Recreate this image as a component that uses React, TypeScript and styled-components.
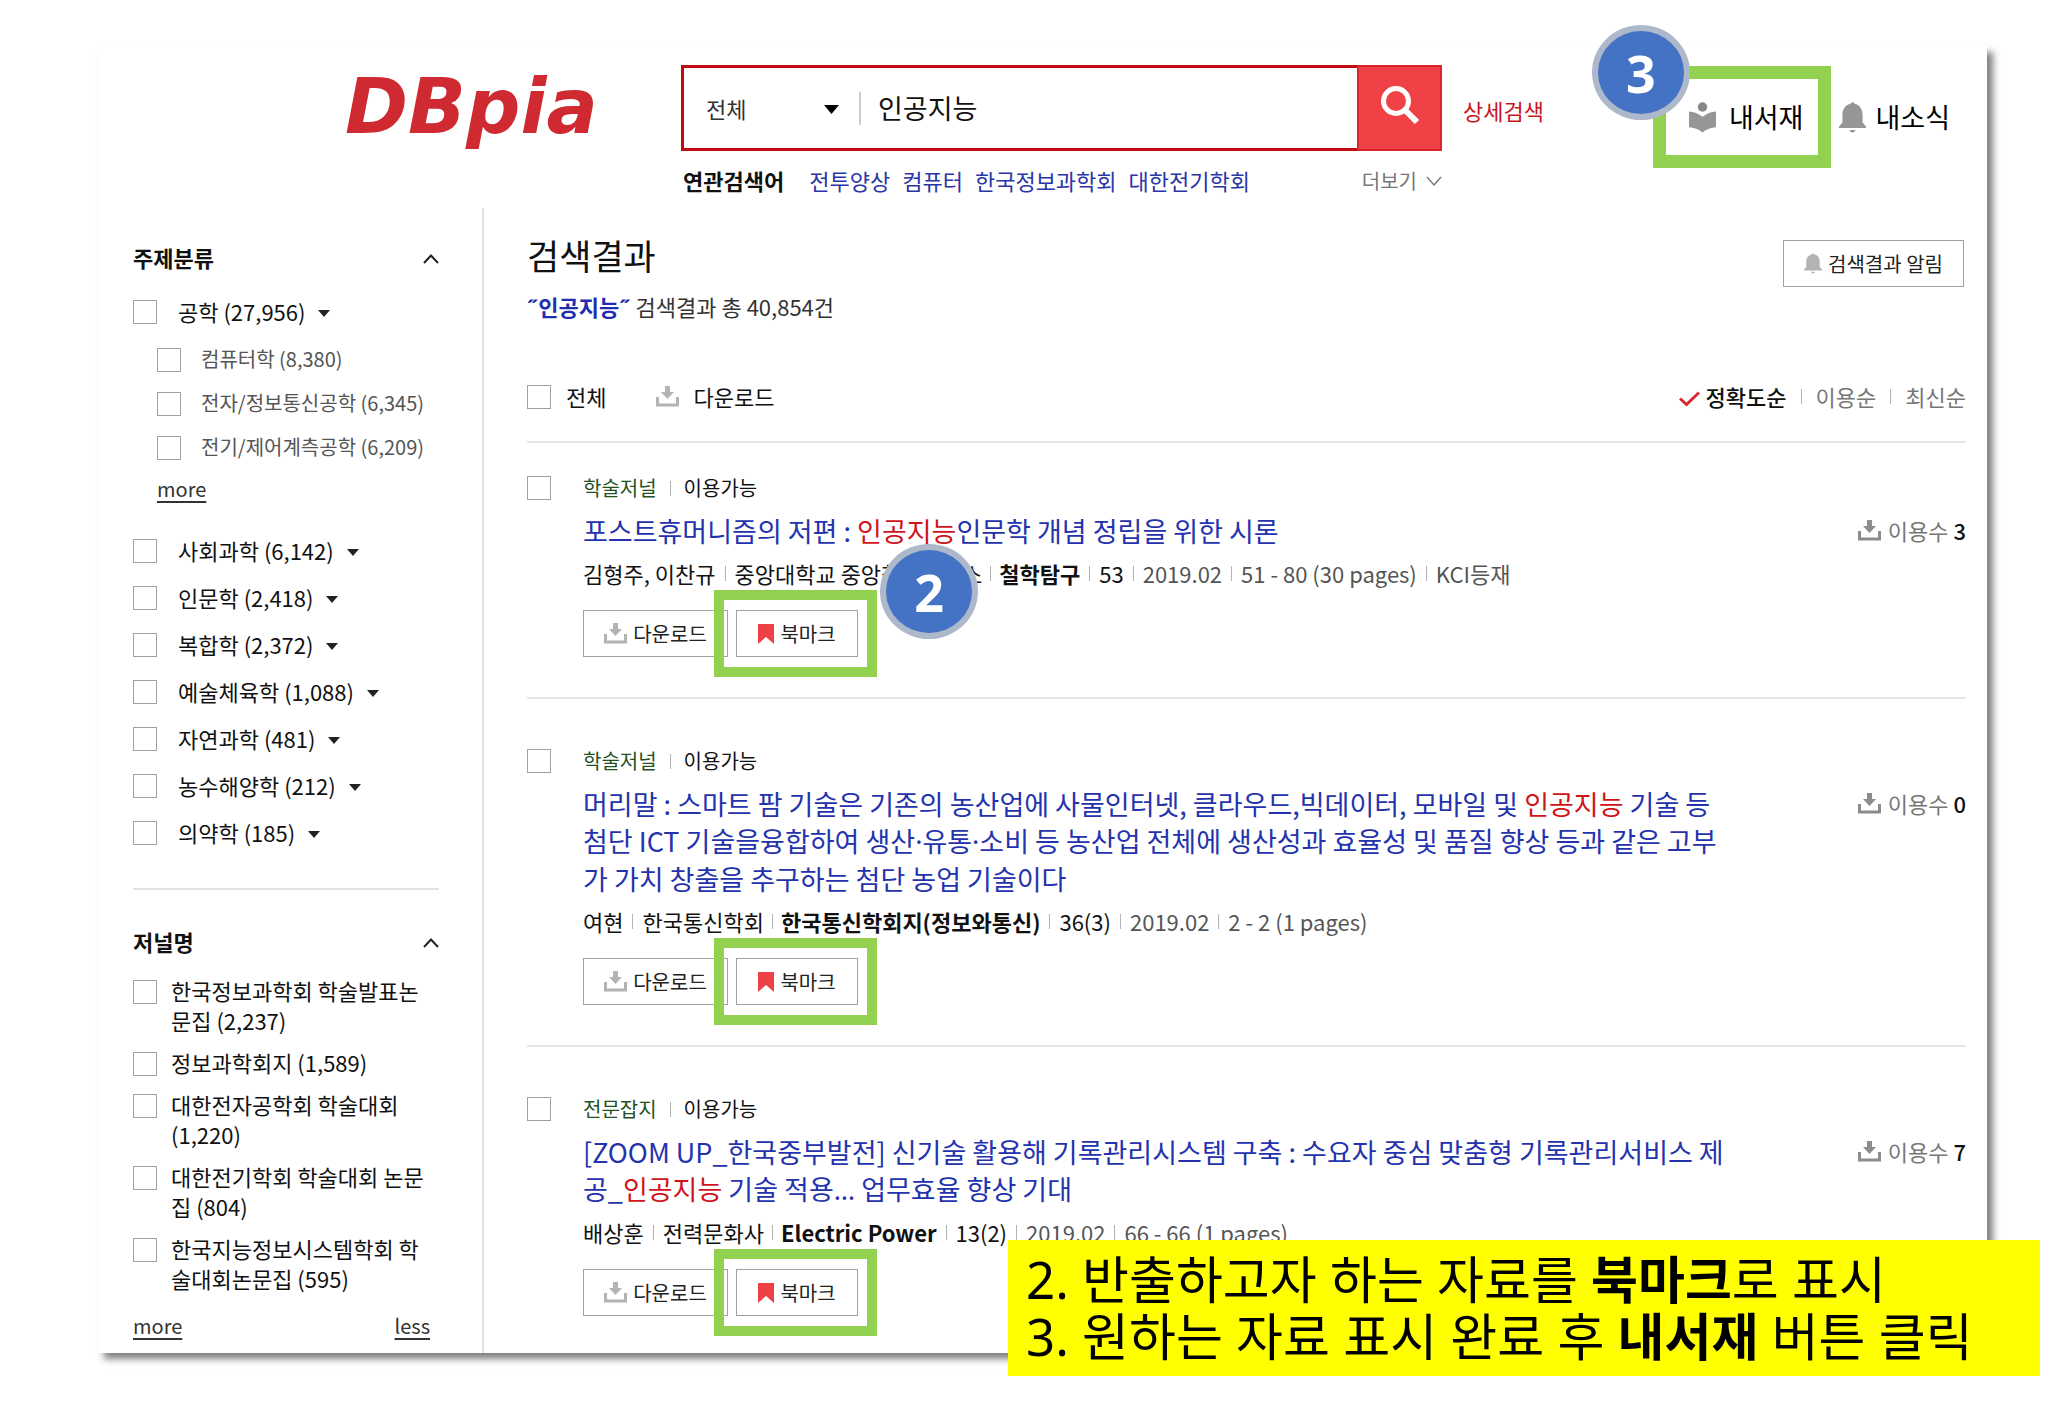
import React from "react";
import styled, { createGlobalStyle, css } from "styled-components";

const sans = `"Noto Sans CJK KR", "Noto Sans", sans-serif`;

const GlobalStyle = createGlobalStyle`
  *, *::before, *::after { box-sizing: border-box; }
  body { margin: 0; background: #fff; color: #111; font-family: ${sans}; font-size: 22px; line-height: 30px; }
  button, input, select { font: inherit; color: inherit; }
  h1, h2, h3, p, ul { margin: 0; padding: 0; font-weight: 400; }
  ul { list-style: none; }
  a { color: inherit; text-decoration: none; }
`;

/* ---------- frame ---------- */

const Slide = styled.div`
  position: relative;
  min-height: 100vh;
  padding: 46px 68px 50px 98px;
`;

const Panel = styled.div`
  background: #fff;
  box-shadow: 6px 6px 7px rgba(0, 0, 0, 0.5);
`;

const Columns = styled.div`
  display: flex;
`;

/* ---------- header ---------- */

const Header = styled.header`
  display: flex;
  align-items: flex-start;
  padding: 19px 37px 0 247px;
  height: 162px;
`;

const Logo = styled.a`
  flex: 0 0 336px;
  margin-top: 9px;
  font-family: "DejaVu Sans", sans-serif;
  font-size: 76px;
  line-height: 66px;
  font-weight: 700;
  font-style: italic;
  color: #cf2a31;
`;

const SearchArea = styled.div`
  flex: 0 1 761px;
  min-width: 0;
`;

const SearchForm = styled.form`
  display: flex;
  align-items: center;
  height: 86px;
  border: 3px solid #c00d14;
`;

const ScopeBox = styled.label`
  position: relative;
  flex: 0 0 177px;
  height: 33px;
  padding-left: 22px;
  border-right: 2px solid #ccc;

  svg {
    position: absolute;
    right: 20px;
    top: 13px;
    pointer-events: none;
  }
`;

const ScopeSelect = styled.select`
  width: 100%;
  height: 33px;
  padding: 0;
  border: 0;
  appearance: none;
  background: transparent;
  color: #333;
`;

const QueryInput = styled.input`
  flex: 1;
  min-width: 0;
  padding: 0 17px 2px;
  border: 0;
  outline: 0;
  font-size: 27px;
  line-height: 40px;
  height: 42px;
`;

const SearchButton = styled.button`
  flex: 0 0 85px;
  height: 86px;
  margin-right: -3px;
  display: grid;
  place-items: center;
  padding: 0 0 6px;
  border: 2px solid #d9262d;
  background: #f04246;
  color: #fff;
`;

const RelatedRow = styled.div`
  display: flex;
  align-items: center;
  margin-top: 13px;
  padding-left: 2px;
`;

const RelatedLabel = styled.strong`
  margin-right: 25px;
`;

const RelatedLink = styled.a`
  margin-right: 12px;
  color: #2a36a8;
`;

const MoreButton = styled.button`
  display: flex;
  align-items: center;
  gap: 9px;
  margin-left: auto;
  padding: 2px 0 0;
  border: 0;
  background: none;
  color: #777;
  font-size: 20px;
`;

const DetailLink = styled.a`
  margin: 30px 0 0 21px;
  color: #c8161d;
`;

const UserNav = styled.nav`
  display: flex;
  gap: 36px;
  margin: 34px 0 0 auto;
`;

const UserLink = styled.a<{ $gap: number }>`
  position: relative;
  display: flex;
  align-items: center;
  gap: ${(p) => p.$gap}px;
  height: 36px;
  font-size: 27px;
  color: #000;
`;

/* ---------- annotations laid over the page ---------- */

const Highlight = styled.span<{ $large?: boolean }>`
  position: absolute;
  z-index: 1;
  pointer-events: none;
  ${(p) =>
    p.$large
      ? css`inset: -33px -28px -33px -36px; border: 13px solid #92d050;`
      : css`inset: -21px -20px -21px -23px; border: 10px solid #92d050;`}
`;

const StepBadge = styled.span<{ $x: number; $y: number }>`
  position: absolute;
  z-index: 2;
  left: ${(p) => p.$x}px;
  top: ${(p) => p.$y}px;
  display: grid;
  place-items: center;
  width: 98px;
  height: 95px;
  border: 6px solid #adb9ca;
  border-radius: 50%;
  background: #4472c4;
  color: #fff;
  font-family: "Noto Sans", sans-serif;
  font-size: 52px;
  line-height: 60px;
  font-weight: 700;
`;

const Note = styled.div`
  position: absolute;
  z-index: 3;
  right: 15px;
  bottom: 30px;
  width: 1032px;
  height: 136px;
  padding: 11px 18px;
  background: #ff0;
  color: #000;
  font-family: "Noto Sans", "Noto Sans CJK KR", sans-serif;
  font-size: 51px;
  line-height: 57px;
  white-space: nowrap;
`;

/* ---------- form parts ---------- */

const Check = styled.input.attrs({ type: "checkbox" })`
  flex: 0 0 24px;
  width: 24px;
  height: 24px;
  margin: 0;
  appearance: none;
  border: 1px solid #a0a0a0;
  background: #fff;
`;

/* ---------- sidebar ---------- */

const Sidebar = styled.aside`
  flex: 0 0 386px;
  padding: 34px 43px 12px 35px;
  border-right: 2px solid #e0e0e0;
`;

const FacetHead = styled.div`
  display: flex;
  align-items: center;
  justify-content: space-between;
  height: 30px;
`;

const FacetTitle = styled.h2`
  font-size: 22px;
  font-weight: 700;
`;

const IconButton = styled.button`
  display: flex;
  padding: 3px 0 0;
  border: 0;
  background: none;
  color: #222;
`;

const SubjectList = styled.ul<{ $top?: number }>`
  padding-top: ${(p) => p.$top ?? 0}px;
`;

const FacetRow = styled.li`
  display: flex;
  align-items: center;
  height: 47px;

  label { margin: 0 13px 0 21px; padding-bottom: 2px; }
`;

const SubList = styled.ul`
  padding: 3px 0 0 24px;
`;

const SubRow = styled.li`
  display: flex;
  align-items: center;
  gap: 20px;
  height: 44px;
  font-size: 20px;
  color: #555;
  white-space: nowrap;

  label { padding-bottom: 2px; }
`;

const TextLink = styled.a`
  font-size: 20px;
  color: #333;
  text-decoration: underline;
  text-underline-offset: 4px;
`;

const SubMore = styled.div`
  height: 57px;
  padding: 2px 0 0 24px;
`;

const Divider = styled.hr`
  height: 2px;
  margin: 32px 0 36px;
  border: 0;
  background: #e2e2e2;
`;

const JournalList = styled.ul`
  display: grid;
  gap: 12px;
  padding-top: 19px;
`;

const JournalRow = styled.li`
  display: flex;
  align-items: flex-start;
  gap: 14px;

  input { margin-top: 5px; }
`;

const FacetFoot = styled.div`
  display: flex;
  justify-content: space-between;
  padding: 18px 9px 0 0;
`;

/* ---------- results ---------- */

const Main = styled.main`
  flex: 1;
  min-width: 0;
  padding: 22px 21px 0 43px;
`;

const ResultHead = styled.div`
  display: flex;
  justify-content: space-between;
  align-items: flex-start;
`;

const ResultTitle = styled.h1`
  font-size: 35px;
  line-height: 50px;
`;

const ResultCount = styled.p`
  margin-top: 11px;
  color: #333;

  strong { color: #1f2db0; }
`;

const OutlineButton = styled.button<{ $width: number }>`
  position: relative;
  display: flex;
  align-items: center;
  justify-content: center;
  gap: 6px;
  width: ${(p) => p.$width}px;
  height: 47px;
  padding: 0;
  border: 1px solid #a0a0a0;
  background: #fff;
  font-size: 20px;
  color: #222;
`;

const AlertSlot = styled.div`
  padding: 10px 2px 0 0;
`;

const Toolbar = styled.div`
  display: flex;
  align-items: center;
  height: 90px;
  margin-top: 32px;
  border-bottom: 2px solid #e5e5e5;

  & > label { margin: 0 50px 0 15px; padding-bottom: 2px; }
`;

const PlainButton = styled.button`
  display: flex;
  align-items: center;
  gap: 14px;
  padding: 0 0 2px;
  border: 0;
  background: none;
`;

const SortList = styled.div`
  display: flex;
  align-items: center;
  margin-left: auto;
  padding-bottom: 2px;
  color: #777;
`;

const SortLink = styled.a<{ $active?: boolean }>`
  display: flex;
  align-items: center;
  gap: 6px;
  ${(p) => p.$active && css`color: #111; font-weight: 500;`}
`;

const Sep = styled.span<{ $space: number }>`
  display: inline-block;
  width: 1px;
  height: 15px;
  margin: 0 ${(p) => p.$space}px;
  background: #b4b4b4;
`;

const Item = styled.li`
  display: flex;
  align-items: flex-start;
  padding: 48px 0 40px;
  border-bottom: 2px solid #e5e5e5;

  &:first-child { padding-top: 31px; }
  &:last-child { padding-bottom: 0; border-bottom: 0; }
  & > input { margin: 2px 32px 0 0; }
`;

const ItemBody = styled.div`
  flex: 1;
  min-width: 0;
`;

const Category = styled.div`
  display: flex;
  align-items: center;
  height: 28px;
  font-size: 20px;
  line-height: 28px;
`;

const CategoryName = styled.span`
  color: #23511f;
`;

const ItemTitle = styled.h3`
  max-width: 1150px;
  margin-top: 10px;
  font-size: 27px;
  line-height: 37px;
  color: #2433ad;

  em { font-style: normal; color: #d0141a; }
`;

const Punctuation = styled.span`
  font-family: "Noto Sans", sans-serif;
`;

const Meta = styled.div`
  display: flex;
  align-items: center;
  margin-top: 9px;
  white-space: nowrap;
`;

const MetaPart = styled.span<{ $tone?: "strong" | "dim" }>`
  font-weight: ${(p) => (p.$tone === "strong" ? 700 : 400)};
  color: ${(p) => (p.$tone === "dim" ? "#555" : "#111")};

  & + & { margin-left: 1px; }
`;

const Actions = styled.div`
  display: flex;
  gap: 8px;
  margin-top: 22px;
`;

const Usage = styled.div`
  display: flex;
  align-items: center;
  gap: 7px;
  margin-top: 41px;
  color: #777;

  strong { font-weight: 500; color: #111; }
`;

/* ---------- icons ---------- */

const DownloadIcon = ({ color = "#b3b3b3" }: { color?: string }) => (
  <svg width="23" height="21" viewBox="0 0 23 21" aria-hidden="true">
    <path fill={color} d="M9 0h5v6h4l-6.500 7L5 6h4z" />
    <path fill="none" stroke={color} strokeWidth="3" d="M1.500 11v8h20v-8" />
  </svg>
);

const BookmarkIcon = () => (
  <svg width="16" height="20" viewBox="0 0 16 20" aria-hidden="true">
    <path fill="#ee4147" d="M0 0h16v20l-8-7-8 7z" />
  </svg>
);

const BellIcon = ({ size, color }: { size: number; color: string }) => (
  <svg width={size} height={Math.round((size * 31) / 27)} viewBox="0 0 27 31" aria-hidden="true">
    <path
      fill={color}
      d="M12 1.500a1.700 1.700 0 0 1 3.200 0C21 2.800 23.600 7.500 23.600 13v7.500l3.400 4v1.600H0v-1.600l3.400-4V13C3.400 7.500 6.200 2.800 12 1.500zM10.500 28h6c-.5 1.600-1.500 2.400-3 2.400s-2.500-.8-3-2.400z"
    />
  </svg>
);

const LibraryIcon = () => (
  <svg width="27" height="31" viewBox="0 0 27 31" aria-hidden="true">
    <circle cx="13.500" cy="5" r="4.700" fill="#888" />
    <path fill="#969696" d="M0 9.500c5 .4 9.500 2 13.500 5.300C17.500 11.500 22 9.900 27 9.500v15.800c-5 .4-9.500 2-13.500 5.200C9.500 27.300 5 25.700 0 25.300z" />
  </svg>
);

const SearchIcon = () => (
  <svg width="40" height="40" viewBox="0 0 40 40" fill="none" stroke="#fff" aria-hidden="true">
    <circle cx="16" cy="16" r="12.500" strokeWidth="5" />
    <path strokeWidth="6" d="M25 25l12 12" />
  </svg>
);

const Chevron = ({ up }: { up?: boolean }) => (
  <svg
    width="16"
    height="10"
    viewBox="0 0 16 10"
    fill="none"
    stroke="currentColor"
    strokeWidth={up ? 2 : 1.4}
    aria-hidden="true"
  >
    <path d={up ? "M1 9l7-7.500L15 9" : "M1 1l7 8 7-8"} />
  </svg>
);

const Caret = ({ width, height, color }: { width: number; height: number; color: string }) => (
  <svg width={width} height={height} viewBox="0 0 12 8" preserveAspectRatio="none" aria-hidden="true">
    <path fill={color} d="M0 0h12L6 8z" />
  </svg>
);

const TickIcon = () => (
  <svg width="21" height="23" viewBox="0 -6 21 23" fill="none" stroke="#d9272e" strokeWidth="3" aria-hidden="true">
    <path d="M1 7.500l6.500 6L20 1.500" />
  </svg>
);

/* ---------- data ---------- */

const engineering = ["컴퓨터학 (8,380)", "전자/정보통신공학 (6,345)", "전기/제어계측공학 (6,209)"];
const subjects = [
  "사회과학 (6,142)",
  "인문학 (2,418)",
  "복합학 (2,372)",
  "예술체육학 (1,088)",
  "자연과학 (481)",
  "농수해양학 (212)",
  "의약학 (185)",
];
const journals = [
  "한국정보과학회 학술발표논문집 (2,237)",
  "정보과학회지 (1,589)",
  "대한전자공학회 학술대회 (1,220)",
  "대한전기학회 학술대회 논문집 (804)",
  "한국지능정보시스템학회 학술대회논문집 (595)",
];
const related = ["전투양상", "컴퓨터", "한국정보과학회", "대한전기학회"];

type Paper = {
  kind: string;
  title: [string, string, string];
  authors: string;
  publisher: string;
  journal: string;
  issue: string;
  rest: string[];
  uses: number;
  step?: number;
};

const papers: Paper[] = [
  {
    kind: "학술저널",
    title: ["포스트휴머니즘의 저편 : ", "인공지능", "인문학 개념 정립을 위한 시론"],
    authors: "김형주, 이찬규",
    publisher: "중앙대학교 중앙철학연구소",
    journal: "철학탐구",
    issue: "53",
    rest: ["2019.02", "51 - 80 (30 pages)", "KCI등재"],
    uses: 3,
    step: 2,
  },
  {
    kind: "학술저널",
    title: [
      "머리말 : 스마트 팜 기술은 기존의 농산업에 사물인터넷, 클라우드,빅데이터, 모바일 및 ",
      "인공지능",
      " 기술 등 첨단 ICT 기술을융합하여 생산·유통·소비 등 농산업 전체에 생산성과 효율성 및 품질 향상 등과 같은 고부가 가치 창출을 추구하는 첨단 농업 기술이다",
    ],
    authors: "여현",
    publisher: "한국통신학회",
    journal: "한국통신학회지(정보와통신)",
    issue: "36(3)",
    rest: ["2019.02", "2 - 2 (1 pages)"],
    uses: 0,
  },
  {
    kind: "전문잡지",
    title: [
      "[ZOOM UP_한국중부발전] 신기술 활용해 기록관리시스템 구축 : 수요자 중심 맞춤형 기록관리서비스 제공_",
      "인공지능",
      " 기술 적용… 업무효율 향상 기대",
    ],
    authors: "배상훈",
    publisher: "전력문화사",
    journal: "Electric Power",
    issue: "13(2)",
    rest: ["2019.02", "66 - 66 (1 pages)"],
    uses: 7,
  },
];

/* ---------- sections ---------- */

/* The Korean face sets the middle dot and ellipsis full width; these take the Latin forms. */
const withLatinMarks = (text: string) =>
  text
    .split(/([·…])/)
    .map((part, i) => (i % 2 ? <Punctuation key={i}>{part}</Punctuation> : part));

const SubjectRow = ({ id, text }: { id: string; text: string }) => (
  <FacetRow>
    <Check id={id} />
    <label htmlFor={id}>{text}</label>
    <IconButton type="button" aria-label={`${text} 펼치기`}>
      <Caret width={12} height={7} color="#222" />
    </IconButton>
  </FacetRow>
);

const FacetHeading = ({ title }: { title: string }) => (
  <FacetHead>
    <FacetTitle>{title}</FacetTitle>
    <IconButton type="button" aria-label={`${title} 접기`}>
      <Chevron up />
    </IconButton>
  </FacetHead>
);

const PaperItem = ({ paper, index }: { paper: Paper; index: number }) => (
  <Item>
    <Check aria-label={paper.title.join("")} id={`paper-${index}`} />
    <ItemBody>
      <Category>
        <CategoryName>{paper.kind}</CategoryName>
        <Sep $space={13} />
        <span>이용가능</span>
      </Category>
      <ItemTitle>
        <a href="#paper">
          {paper.title[0]}
          <em>{paper.title[1]}</em>
          {withLatinMarks(paper.title[2])}
        </a>
      </ItemTitle>
      <Meta>
        <MetaPart>{paper.authors}</MetaPart>
        <Sep $space={9} />
        <MetaPart>{paper.publisher}</MetaPart>
        <Sep $space={8} />
        <MetaPart $tone="strong">{paper.journal}</MetaPart>
        <Sep $space={9} />
        <MetaPart>{paper.issue}</MetaPart>
        {paper.rest.map((part) => (
          <React.Fragment key={part}>
            <Sep $space={9} />
            <MetaPart $tone="dim">{part}</MetaPart>
          </React.Fragment>
        ))}
      </Meta>
      <Actions>
        <OutlineButton type="button" $width={145}>
          <DownloadIcon />
          다운로드
        </OutlineButton>
        <OutlineButton type="button" $width={122}>
          <BookmarkIcon />
          북마크
          <Highlight />
          {paper.step && (
            <StepBadge $x={143} $y={-67}>
              {paper.step}
            </StepBadge>
          )}
        </OutlineButton>
      </Actions>
    </ItemBody>
    <Usage>
      <DownloadIcon color="#8c8c8c" />
      <span>
        이용수 <strong>{paper.uses}</strong>
      </span>
    </Usage>
  </Item>
);

export default function App() {
  return (
    <>
      <GlobalStyle />
      <Slide>
        <Panel>
          <Header>
            <Logo href="#home">DBpia</Logo>
            <SearchArea>
              <SearchForm onSubmit={(e) => e.preventDefault()}>
                <ScopeBox>
                  <ScopeSelect aria-label="검색 범위">
                    <option>전체</option>
                  </ScopeSelect>
                  <Caret width={15} height={9} color="#000" />
                </ScopeBox>
                <QueryInput aria-label="검색어" defaultValue="인공지능" />
                <SearchButton type="submit" aria-label="검색">
                  <SearchIcon />
                </SearchButton>
              </SearchForm>
              <RelatedRow>
                <RelatedLabel>연관검색어</RelatedLabel>
                {related.map((word) => (
                  <RelatedLink key={word} href="#related">
                    {word}
                  </RelatedLink>
                ))}
                <MoreButton type="button">
                  더보기
                  <Chevron />
                </MoreButton>
              </RelatedRow>
            </SearchArea>
            <DetailLink href="#detail">상세검색</DetailLink>
            <UserNav>
              <UserLink href="#library" $gap={13}>
                <LibraryIcon />
                내서재
                <Highlight $large />
                <StepBadge $x={-97} $y={-74}>
                  3
                </StepBadge>
              </UserLink>
              <UserLink href="#news" $gap={9}>
                <BellIcon size={27} color="#969696" />
                내소식
              </UserLink>
            </UserNav>
          </Header>

          <Columns>
            <Sidebar>
              <FacetHeading title="주제분류" />
              <SubjectList $top={16}>
                <SubjectRow id="engineering" text="공학 (27,956)" />
              </SubjectList>
              <SubList>
                {engineering.map((text, i) => (
                  <SubRow key={text}>
                    <Check id={`sub-${i}`} />
                    <label htmlFor={`sub-${i}`}>{text}</label>
                  </SubRow>
                ))}
              </SubList>
              <SubMore>
                <TextLink href="#more">more</TextLink>
              </SubMore>
              <SubjectList>
                {subjects.map((text, i) => (
                  <SubjectRow key={text} id={`subject-${i}`} text={text} />
                ))}
              </SubjectList>
              <Divider />
              <FacetHeading title="저널명" />
              <JournalList>
                {journals.map((text, i) => (
                  <JournalRow key={text}>
                    <Check id={`journal-${i}`} />
                    <label htmlFor={`journal-${i}`}>{text}</label>
                  </JournalRow>
                ))}
              </JournalList>
              <FacetFoot>
                <TextLink href="#more-journals">more</TextLink>
                <TextLink href="#less-journals">less</TextLink>
              </FacetFoot>
            </Sidebar>

            <Main>
              <ResultHead>
                <div>
                  <ResultTitle>검색결과</ResultTitle>
                  <ResultCount>
                    <strong>˝인공지능˝</strong> 검색결과 총 40,854건
                  </ResultCount>
                </div>
                <AlertSlot>
                  <OutlineButton type="button" $width={181}>
                    <BellIcon size={18} color="#b3b3b3" />
                    검색결과 알림
                  </OutlineButton>
                </AlertSlot>
              </ResultHead>
              <Toolbar>
                <Check id="all" />
                <label htmlFor="all">전체</label>
                <PlainButton type="button">
                  <DownloadIcon />
                  다운로드
                </PlainButton>
                <SortList>
                  <SortLink href="#accuracy" $active>
                    <TickIcon />
                    정확도순
                  </SortLink>
                  <Sep $space={14} />
                  <SortLink href="#uses">이용순</SortLink>
                  <Sep $space={14} />
                  <SortLink href="#latest">최신순</SortLink>
                </SortList>
              </Toolbar>
              <ul>
                {papers.map((paper, i) => (
                  <PaperItem key={paper.journal} paper={paper} index={i} />
                ))}
              </ul>
            </Main>
          </Columns>
        </Panel>

        <Note>
          <p>
            2. 반출하고자 하는 자료를 <strong>북마크</strong>로 표시
          </p>
          <p>
            3. 원하는 자료 표시 완료 후 <strong>내서재</strong> 버튼 클릭
          </p>
        </Note>
      </Slide>
    </>
  );
}
